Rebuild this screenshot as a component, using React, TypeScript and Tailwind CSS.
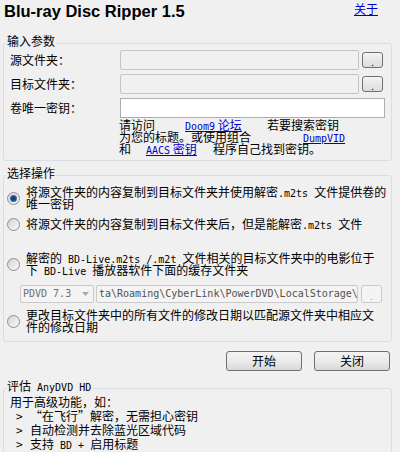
import type { ReactNode } from "react";

function Lat({ children }: { children: ReactNode }) {
	return <span className="font-['DejaVu_Sans_Mono',monospace] text-[10px] leading-[0px]">{children}</span>;
}

function Radio({ checked = false }: { checked?: boolean }) {
	return (
		<div className="flex h-[13px] w-[13px] flex-shrink-0 items-center justify-center rounded-full border border-[#8f8f8f] bg-gradient-to-br from-[#d4d4d4] to-[#fafafa]">
			{checked && (
				<div className="h-[7px] w-[7px] rounded-full bg-[radial-gradient(circle,#173f73_30%,#4d9be0_100%)]"></div>
			)}
		</div>
	);
}

function DotButton({ disabled = false }: { disabled?: boolean }) {
	return (
		<div
			className={
				disabled
					? "flex h-[18px] w-[21px] items-end justify-center rounded-[3px] border border-[#cacaca] bg-[#f4f4f4] text-[10px] leading-[12px] text-[#a0a0a0]"
					: "flex h-[16px] w-[21px] items-end justify-center rounded-[3px] border border-[#707070] bg-gradient-to-b from-[#f4f4f4] to-[#dcdcdc] text-[10px] leading-[11px]"
			}
		>
			.
		</div>
	);
}

function Legend({ children }: { children: ReactNode }) {
	return (
		<legend className="ml-[2px] px-[1px] leading-[14px]">
			<span className="relative top-[-2px]">{children}</span>
		</legend>
	);
}

function Bullet({ children }: { children: ReactNode }) {
	return (
		<div className="flex pl-[6px]">
			<span className="w-[14px]">&gt;</span>
			<span>{children}</span>
		</div>
	);
}

export default function App() {
	return (
		<div className="h-[452px] w-[400px] overflow-hidden bg-[#f0f0f0] font-['Noto_Sans_CJK_SC',sans-serif] text-[12px] text-black">
			{/* header */}
			<div className="flex h-[36px] items-start justify-between">
				<h1 className="ml-[4px] font-['Liberation_Sans',sans-serif] text-[16.5px] font-bold leading-[22px]">
					Blu-ray Disc Ripper 1.5
				</h1>
				<a className="mr-[22px] mt-[2px] leading-[14px] text-[#0000cc] underline">关于</a>
			</div>

			{/* 输入参数 */}
			<fieldset className="ml-[3px] w-[389px] rounded-[3px] border border-[#d5dfe5]">
				<Legend>输入参数</Legend>
				<div className="pb-[5px] pl-[6px]">
					<div className="flex flex-col gap-[4px]">
						<div className="flex h-[20px] items-center">
							<span className="w-[110px] leading-[14px]">源文件夹：</span>
							<div className="h-[20px] w-[239px] rounded-[2px] border border-[#c4c4c4] bg-[#f0f0f0]"></div>
							<div className="ml-[3px]">
								<DotButton />
							</div>
						</div>
						<div className="flex h-[20px] items-center">
							<span className="w-[110px] leading-[14px]">目标文件夹：</span>
							<div className="h-[20px] w-[239px] rounded-[2px] border border-[#c4c4c4] bg-[#f0f0f0]"></div>
							<div className="ml-[3px]">
								<DotButton />
							</div>
						</div>
						<div className="flex h-[20px] items-center">
							<span className="w-[110px] leading-[14px]">卷唯一密钥：</span>
							<div className="h-[20px] w-[265px] border border-[#abadb3] bg-white"></div>
						</div>
					</div>
					<div className="ml-[109px] mt-[1px] whitespace-nowrap leading-[12px]">
						<div>
							<span className="inline-block w-[66px]">请访问</span>
							<a className="inline-block w-[82px] text-[#0000cc]">
								<span className="underline">
									<Lat>Doom9</Lat> 论坛
								</span>
							</a>
							<span>若要搜索密钥</span>
						</div>
						<div>
							<span className="inline-block w-[184px]">为您的标题。或使用组合</span>
							<a className="text-[#0000cc] underline">
								<Lat>DumpVID</Lat>
							</a>
						</div>
						<div>
							<span className="inline-block w-[27px]">和</span>
							<a className="inline-block w-[67px] text-[#0000cc]">
								<span className="underline">
									<Lat>AACS</Lat> 密钥
								</span>
							</a>
							<span>程序自己找到密钥。</span>
						</div>
					</div>
				</div>
			</fieldset>

			{/* 选择操作 */}
			<fieldset className="ml-[3px] mt-[7px] w-[389px] rounded-[3px] border border-[#d5dfe5]">
				<Legend>选择操作</Legend>
				<div className="pb-[8px] pl-[3px] leading-[12px]">
					<div className="mt-[4px] flex h-[24px] items-center gap-[6px]">
						<Radio checked />
						<span className="whitespace-nowrap">
							将源文件夹的内容复制到目标文件夹并使用解密<Lat>.m2ts </Lat>文件提供卷的
							<br />
							唯一密钥
						</span>
					</div>
					<div className="mt-[8px] flex h-[12px] items-center gap-[6px]">
						<Radio />
						<span className="whitespace-nowrap">
							将源文件夹的内容复制到目标文件夹后，但是能解密<Lat>.m2ts </Lat>文件
						</span>
					</div>
					<div className="mt-[22px] flex h-[24px] items-center gap-[6px]">
						<Radio />
						<span className="whitespace-nowrap">
							解密的<Lat> BD-Live.m2ts /.m2t </Lat>文件相关的目标文件夹中的电影位于
							<br />
							下<Lat> BD-Live </Lat>播放器软件下面的缓存文件夹
						</span>
					</div>
					<div className="ml-[13px] mt-[9px] flex h-[18px] items-center">
						<div className="flex h-[18px] w-[74px] items-center justify-between rounded-[2px] border border-[#cacaca] bg-[#f4f4f4] pl-[2px] pr-[4px] text-[#707070]">
							<span className="font-['DejaVu_Sans_Mono',monospace] text-[10px]">PDVD 7.3</span>
							<svg width="7" height="4" viewBox="0 0 7 4">
								<path d="M0 0 H7 L3.5 4 Z" fill="#a8a8a8" />
							</svg>
						</div>
						<div className="ml-[2px] flex h-[18px] w-[262px] items-center overflow-hidden whitespace-nowrap rounded-[2px] border border-[#cacaca] bg-[#f4f4f4] pl-[2px] font-['DejaVu_Sans_Mono',monospace] text-[10px] text-[#505050]">
							ta\Roaming\CyberLink\PowerDVD\LocalStorage\
						</div>
						<div className="ml-[3px]">
							<DotButton disabled />
						</div>
					</div>
					<div className="mt-[6px] flex h-[24px] items-center gap-[6px]">
						<Radio />
						<span className="whitespace-nowrap">
							更改目标文件夹中的所有文件的修改日期以匹配源文件夹中相应文
							<br />
							件的修改日期
						</span>
					</div>
				</div>
			</fieldset>

			{/* buttons */}
			<div className="mr-[10px] mt-[9px] flex justify-end gap-[12px]">
				<button className="h-[20px] w-[76px] rounded-[3px] border border-[#707070] bg-gradient-to-b from-[#f3f3f3] via-[#ebebeb] to-[#d8d8d8] leading-[18px]">
					开始
				</button>
				<button className="h-[20px] w-[76px] rounded-[3px] border border-[#707070] bg-gradient-to-b from-[#f3f3f3] via-[#ebebeb] to-[#d8d8d8] leading-[18px]">
					关闭
				</button>
			</div>

			{/* 评估 AnyDVD HD */}
			<fieldset className="ml-[3px] mt-[10px] h-[120px] w-[389px] rounded-[3px] border border-[#d5dfe5]">
				<Legend>
					评估<Lat> AnyDVD HD</Lat>
				</Legend>
				<div className="pl-[6px] leading-[14px]">
					<div>用于高级功能，如：</div>
					<Bullet>“在飞行”解密，无需担心密钥</Bullet>
					<Bullet>自动检测并去除蓝光区域代码</Bullet>
					<Bullet>
						支持<Lat> BD + </Lat>启用标题
					</Bullet>
				</div>
			</fieldset>
		</div>
	);
}
